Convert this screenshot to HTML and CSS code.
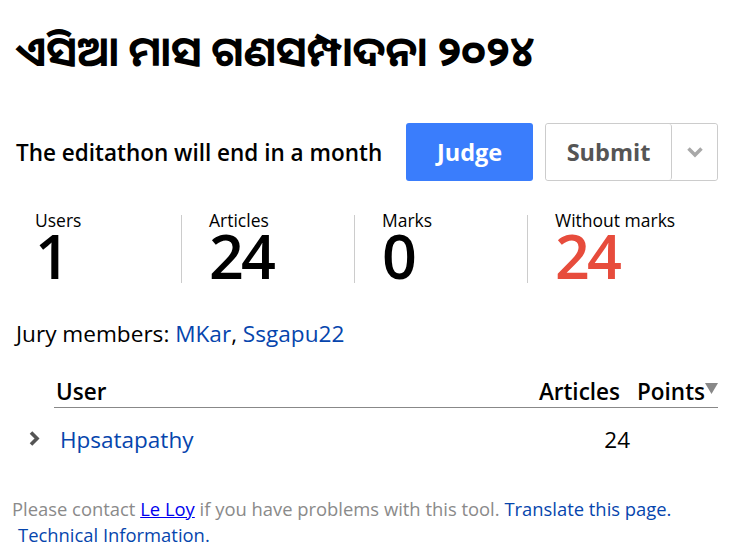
FILE: index.html
```html
<!DOCTYPE html>
<html>
<head>
<meta charset="utf-8">
<link rel="stylesheet" href="styles.css">
</head>
<body>
<div class="page">
  <h1 class="title">ଏସିଆ ମାସ ଗଣସମ୍ପାଦନା ୨୦୨୪</h1>
  <div class="status">
    <div class="ends">The editathon will end in a month</div>
    <button class="btn judge">Judge</button>
    <div class="btn-group">
      <button class="btn submit">Submit</button>
      <button class="btn caret"><svg width="18" height="12" viewBox="0 0 18 12"><path d="M2.5 2.5 L9 9 L15.5 2.5" fill="none" stroke="#a8a8a8" stroke-width="3.5"/></svg></button>
    </div>
  </div>
  <div class="stats">
    <div class="stat"><div class="label">Users</div><div class="num">1</div></div>
    <div class="stat"><div class="label">Articles</div><div class="num">24</div></div>
    <div class="stat"><div class="label">Marks</div><div class="num">0</div></div>
    <div class="stat"><div class="label">Without marks</div><div class="num red">24</div></div>
  </div>
  <div class="jury">Jury members: <a href="#">MKar</a>, <a href="#">Ssgapu22</a></div>
  <div class="table">
    <div class="thead">
      <div class="c-user">User</div>
      <div class="c-art">Articles</div>
      <div class="c-pts">Points<svg class="sort" width="13" height="11" viewBox="0 0 13 11"><polygon points="0,0 13,0 6.5,11" fill="#888"/></svg></div>
    </div>
    <div class="row">
      <div class="chev"><svg width="12" height="17" viewBox="0 0 12 17"><path d="M3 2.5 L9 8.5 L3 14.5" fill="none" stroke="#555" stroke-width="3.6"/></svg></div>
      <div class="c-user"><a href="#">Hpsatapathy</a></div>
      <div class="c-art">24</div>
      <div class="c-pts"></div>
    </div>
  </div>
  <div class="footer">
    Please contact <a class="ul" href="#">Le Loy</a> if you have problems with this tool. <a href="#">Translate this page.</a><br>
    <a class="tech" href="#">Technical Information.</a>
  </div>
</div>
</body>
</html>
```
FILE: styles.css
```css
body {
  margin: 0;
  font-family: "Open Sans", "Noto Sans", sans-serif;
  color: #000;
  background: #fff;
}
.page {
  padding: 0 12px 0 16px;
}
.title {
  margin: 0;
  padding-top: 24px;
  font-family: "Noto Sans Oriya", "Noto Sans", sans-serif;
  font-size: 41.6px;
  font-weight: bold;
  line-height: 52px;
  height: 99px;
  white-space: nowrap;
}
.status {
  display: flex;
  align-items: center;
  height: 58px;
}
.ends {
  font-size: 22.5px;
  font-weight: 600;
  margin-right: 24px;
  white-space: nowrap;
}
.btn {
  font-family: inherit;
  font-size: 23.5px;
  font-weight: 700;
  height: 58px;
  border-radius: 3px;
  cursor: pointer;
  padding: 0;
}
.judge {
  width: 127px;
  background: #3a7dfc;
  color: #fff;
  border: none;
  margin-right: 12px;
}
.btn-group {
  display: flex;
  border: 1px solid #ccc;
  border-radius: 3px;
  height: 56px;
}
.btn-group .btn {
  height: 56px;
  background: #fff;
  border: none;
  color: #555;
}
.submit {
  width: 126px;
  border-right: 1px solid #ccc !important;
}
.caret {
  width: 45px;
  display: flex;
  align-items: center;
  justify-content: center;
}
.stats {
  display: grid;
  grid-template-columns: repeat(4, 173px);
  margin-top: 34px;
  margin-left: -8px;
}
.stat {
  padding-left: 27px;
  border-left: 1px solid #ccc;
  height: 68px;
}
.stat:first-child {
  border-left: none;
}
.label {
  font-size: 17.5px;
  line-height: 20px;
  margin-top: -5px;
  white-space: nowrap;
}
.num {
  font-size: 61px;
  font-weight: 600;
  line-height: 50px;
  letter-spacing: -3px;
  margin-top: 1px;
}
.red {
  color: #e74c3c;
}
.jury {
  margin-top: 36px;
  font-size: 22.6px;
  line-height: 30px;
}
a {
  color: #0645ad;
  text-decoration: none;
}
.table {
  margin-top: 25px;
  margin-left: 38px;
}
.thead {
  display: flex;
  align-items: flex-end;
  font-size: 22.5px;
  font-weight: 600;
  border-bottom: 1px solid #888;
  height: 33px;
  line-height: 30px;
}
.c-user {
  flex: 1;
  padding-left: 2px;
}
.c-art {
  text-align: right;
}
.c-pts {
  width: 98px;
  box-sizing: border-box;
  padding-left: 17px;
  white-space: nowrap;
}
.sort {
  vertical-align: 6px;
  margin-left: 0;
}
.row {
  display: flex;
  align-items: center;
  height: 62px;
  font-size: 22.5px;
  position: relative;
}
.row .c-pts {
  width: 88px;
}
.chev {
  position: absolute;
  left: -26px;
  top: 22px;
  height: 17px;
}
.chev svg {
  display: block;
}
.row .c-user {
  padding-left: 6px;
}
.footer {
  margin-top: 26px;
  margin-left: -4px;
  font-size: 18.4px;
  line-height: 26px;
  color: #8a8a8a;
}
.footer a {
  color: #0645ad;
}
.footer a.ul {
  color: #0000ee;
  text-decoration: underline;
}
.footer a.tech {
  margin-left: 6px;
}
```
